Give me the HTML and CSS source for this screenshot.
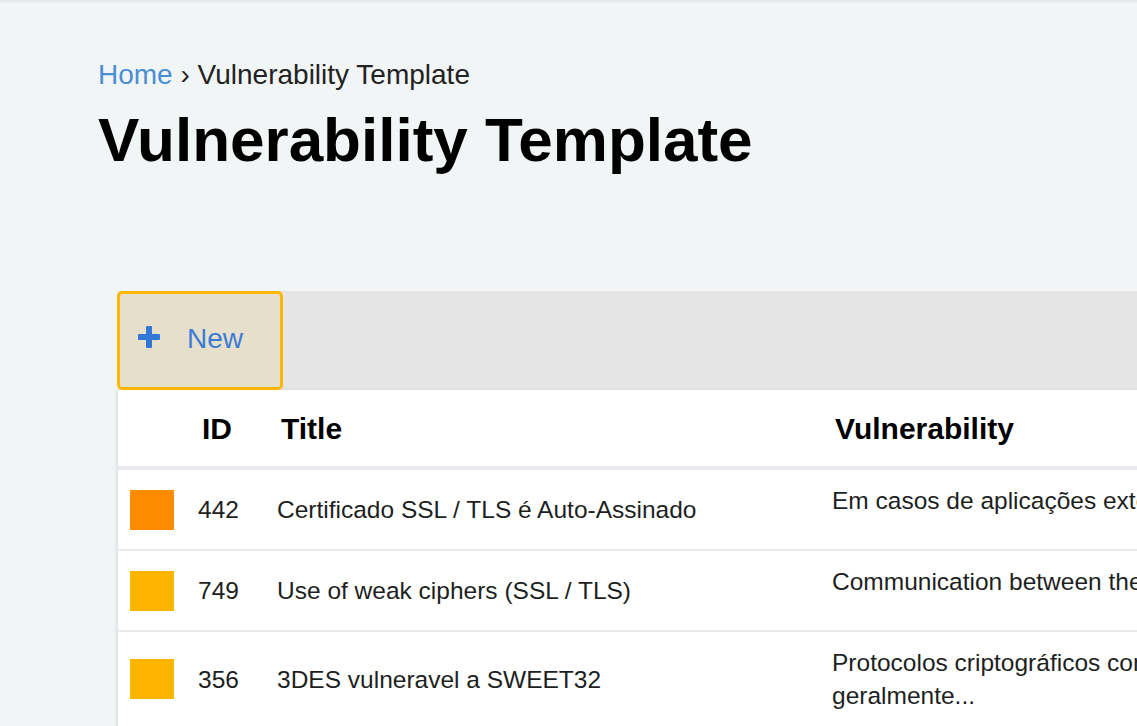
FILE: index.html
```html
<!DOCTYPE html>
<html lang="en">
<head>
<meta charset="utf-8">
<title>Vulnerability Template</title>
<link rel="stylesheet" href="styles.css">
</head>
<body>
<div class="topshadow"></div>
<main class="page">
  <nav class="breadcrumb"><a class="crumb-link" href="#">Home</a> <span class="sep">›</span> <span class="crumb-current">Vulnerability Template</span></nav>
  <h1 class="page-title">Vulnerability Template</h1>

  <section class="card">
    <div class="toolbar">
      <button class="btn-new" type="button">
        <svg class="plus" width="22" height="22" viewBox="0 0 22 22" aria-hidden="true">
          <rect x="8" y="0" width="6" height="22" rx="1" fill="#2f78d6"/>
          <rect x="0" y="8" width="22" height="6" rx="1" fill="#2f78d6"/>
        </svg>
        <span class="btn-label">New</span>
      </button>
    </div>
    <div class="table">
      <div class="row head">
        <div class="cell"></div>
        <div class="cell th">ID</div>
        <div class="cell th">Title</div>
        <div class="cell th th-vuln">Vulnerability</div>
      </div>
      <div class="row">
        <div class="cell"><span class="sev sev-high"></span></div>
        <div class="cell">442</div>
        <div class="cell">Certificado SSL / TLS é Auto-Assinado</div>
        <div class="cell desc">Em casos de aplicações externas...</div>
      </div>
      <div class="row">
        <div class="cell"><span class="sev sev-med"></span></div>
        <div class="cell">749</div>
        <div class="cell">Use of weak ciphers (SSL / TLS)</div>
        <div class="cell desc">Communication between the client and server...</div>
      </div>
      <div class="row">
        <div class="cell"><span class="sev sev-med"></span></div>
        <div class="cell">356</div>
        <div class="cell">3DES vulneravel a SWEET32</div>
        <div class="cell desc">Protocolos criptográficos com cifras de 64 bits geralmente...</div>
      </div>
    </div>
  </section>
</main>
</body>
</html>
```

FILE: styles.css
```css
html, body {
  margin: 0;
  padding: 0;
}
body {
  background: #f2f5f6;
  font-family: "Liberation Sans", Arial, sans-serif;
  color: #1d1f22;
  overflow: hidden;
  width: 1137px;
  height: 726px;
  position: relative;
}
.topshadow {
  height: 4px;
  background: linear-gradient(#e2e5e6, #f2f5f6);
}
.page {
  padding: 55px 0 0 98px;
}
.breadcrumb {
  font-size: 28px;
  line-height: 32px;
  color: #222;
}
.crumb-link {
  color: #4a8fd3;
  text-decoration: none;
}
.page-title {
  margin: 14px 0 0 0;
  font-size: 62px;
  line-height: 70px;
  font-weight: bold;
  color: #000;
}
.card {
  margin: 116px 0 0 20px;
  width: 1300px;
}
.toolbar {
  background: #e5e5e5;
  height: 99px;
  display: flex;
}
.btn-new {
  box-sizing: border-box;
  width: 166px;
  height: 99px;
  margin-left: -1px;
  border: 3px solid #ffb700;
  border-radius: 5px;
  background: #e6dfcc;
  display: flex;
  align-items: center;
  padding: 0 0 3px 18px;
  font-family: "Liberation Sans", Arial, sans-serif;
  cursor: pointer;
}
.plus {
  display: block;
  flex: none;
  margin-bottom: 5px;
}
.btn-label {
  margin-left: 27px;
  font-size: 28px;
  color: #3a7bd5;
}
.table {
  background: #fff;
  box-shadow: -2px 0 3px rgba(0, 0, 0, 0.08);
}
.row {
  display: grid;
  grid-template-columns: 68px 79px 555px 1fr;
  min-height: 79px;
  border-bottom: 2px solid #e8eaed;
  font-size: 24.5px;
}
.row.head {
  min-height: 76px;
  height: 76px;
  border-bottom-width: 4px;
}
.cell {
  display: flex;
  align-items: center;
  padding-left: 12px;
  line-height: 33px;
}
.th {
  padding-left: 16px;
  font-weight: bold;
  font-size: 30px;
  color: #000;
}
.th-vuln {
  padding-left: 15px;
}
.desc {
  display: block;
  padding: 14px 12px 14px 12px;
  align-self: start;
}
.sev {
  display: block;
  width: 44px;
  height: 40px;
}
.sev-high { background: #ff8c00; }
.sev-med { background: #ffb400; }
```
